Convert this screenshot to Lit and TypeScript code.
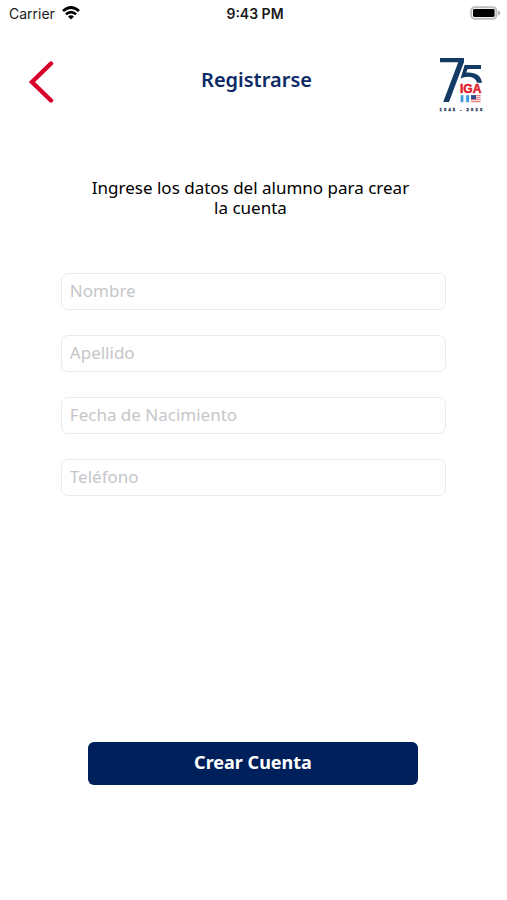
import { LitElement, html, css, svg } from "lit";
import { customElement, property } from "lit/decorators.js";

@customElement("status-bar")
class StatusBar extends LitElement {
  static styles = css`
    :host {
      display: grid;
      grid-template-columns: 1fr auto 1fr;
      align-items: center;
      height: 26px;
      padding: 0 6px 0 9px;
      font-family: Inter, "Liberation Sans", sans-serif;
      font-size: 14px;
      color: #1a1a1a;
    }
    .carrier {
      display: flex;
      align-items: center;
      gap: 7px;
    }
    .time {
      font-weight: 600;
    }
    .battery {
      justify-self: end;
    }
    svg {
      display: block;
    }
  `;

  render() {
    return html`
      <div class="carrier">
        <span>Carrier</span>
        <svg width="18" height="14" viewBox="0 0 18 14" aria-hidden="true">
          <g fill="none" stroke="#000" stroke-width="2.7">
            <path d="M1 5 Q9 -2 17 5" />
            <path d="M3.9 8.3 Q9 3.9 14.1 8.3" />
          </g>
          <path d="M6 10.6 Q9 8 12 10.6 L9 13.6 Z" fill="#000" />
        </svg>
      </div>
      <span class="time">9:43 PM</span>
      <svg class="battery" width="31" height="14" viewBox="0 0 31 14" aria-hidden="true">
        <rect x="1.2" y="1.2" width="25.2" height="11.6" rx="3.6" fill="#fff" stroke="#bdbdbd" stroke-width="2" />
        <rect x="3" y="3" width="21.6" height="8" rx="1.4" fill="#000" />
        <path d="M28 4.6 Q30.4 5.6 30.4 7 Q30.4 8.4 28 9.4 Z" fill="#b4b4b4" />
      </svg>
    `;
  }
}

@customElement("iga-logo")
class IgaLogo extends LitElement {
  static styles = css`
    :host {
      display: block;
    }
    svg {
      display: block;
    }
    .name {
      font: 700 12px "Liberation Sans", sans-serif;
      fill: #e0202c;
      stroke: #e0202c;
      stroke-width: 0.5px;
    }
    .years {
      font: 700 4px "Liberation Sans", sans-serif;
      fill: #24365c;
      stroke: #24365c;
      stroke-width: 0.3px;
    }
  `;

  render() {
    const first = [..."1945"].map((c, i) => svg`<text x=${0.6 + i * 4.4} y="54">${c}</text>`);
    const last = [..."2020"].map((c, i) => svg`<text x=${27.4 + i * 4.5} y="54">${c}</text>`);
    return html`
      <svg width="46" height="56" viewBox="0 0 46 56" role="img" aria-label="IGA 75, 1945 - 2020">
        <path d="M1 1 H25 V5 L10 45 H4.2 L19.2 5.2 H1 Z" fill="#143a66" />
        <path d="M25.6 8 H42 V12 H28.6 L27.2 15.6 Q41.4 14.8 43 25.8 H38.2 Q36 19.4 28.6 19.8 Q25 20 21.6 21.4 Z" fill="#143a66" />
        <text class="name" x="21" y="36.2">IGA</text>
        <rect x="21.6" y="38.2" width="3" height="7" fill="#3b9be0" />
        <rect x="24.6" y="38.2" width="2.6" height="7" fill="#eef6fc" />
        <rect x="27.2" y="38.2" width="3" height="7" fill="#3b9be0" />
        <rect x="32" y="38.2" width="9.6" height="7" fill="#fff" />
        <path d="M32 38.7 H41.6 M32 40.7 H41.6 M32 42.7 H41.6 M32 44.7 H41.6" stroke="#e0606a" stroke-width="1" />
        <rect x="32" y="38.2" width="5" height="4" fill="#2b4f8c" />
        <g class="years">${first}<text x="21" y="54">-</text>${last}</g>
      </svg>
    `;
  }
}

@customElement("text-field")
class TextField extends LitElement {
  @property() label = "";
  @property() type = "text";

  static styles = css`
    :host {
      display: block;
    }
    input {
      display: block;
      box-sizing: border-box;
      width: 100%;
      height: 37px;
      margin: 0;
      padding: 0 8px 2px;
      border: 1px solid #ebebeb;
      border-radius: 7px;
      background: #fff;
      font: 400 17px "Noto Sans", "Open Sans", sans-serif;
      color: #000;
      outline: none;
    }
    input:focus-visible {
      border-color: #00205b;
    }
    input::placeholder {
      color: #c6c6c8;
      opacity: 1;
    }
  `;

  render() {
    return html`<input type=${this.type} placeholder=${this.label} aria-label=${this.label} />`;
  }
}

@customElement("app-root")
class AppRoot extends LitElement {
  static styles = css`
    :host {
      display: flex;
      flex-direction: column;
      box-sizing: border-box;
      min-height: 100vh;
      background: #fff;
      font-family: "Noto Sans", "Open Sans", sans-serif;
    }
    header {
      display: grid;
      grid-template-columns: 1fr auto 1fr;
      align-items: center;
      margin-top: 31px;
      padding: 0 22px 0 28px;
    }
    .back {
      justify-self: start;
      padding: 0 0 6px;
      border: 0;
      background: none;
      cursor: pointer;
    }
    .back svg {
      display: block;
    }
    h1 {
      margin: 0;
      padding-bottom: 10px;
      font-size: 20px;
      line-height: 24px;
      font-weight: 600;
      color: #0b2a66;
    }
    iga-logo {
      justify-self: end;
    }
    form {
      display: flex;
      flex-direction: column;
      flex: 1;
      padding: 0 12% 115px;
    }
    p {
      margin: 65px 32px 55px 26px;
      font-size: 17px;
      line-height: 20px;
      text-align: center;
      color: #000;
    }
    .fields {
      display: flex;
      flex-direction: column;
      gap: 25px;
    }
    .submit {
      height: 43px;
      margin: auto 28px 0 27px;
      padding: 0 0 4px;
      border: 0;
      border-radius: 6px;
      background: #00205b;
      color: #fff;
      font: 700 18px "Noto Sans", "Open Sans", sans-serif;
      cursor: pointer;
    }
  `;

  render() {
    return html`
      <status-bar></status-bar>
      <header>
        <button class="back" type="button" aria-label="Volver">
          <svg width="26" height="42" viewBox="0 0 26 42" aria-hidden="true">
            <path d="M23 2.5 L4 21 L23 39.5" fill="none" stroke="#d6002a" stroke-width="4.4" stroke-linecap="round" />
          </svg>
        </button>
        <h1>Registrarse</h1>
        <iga-logo></iga-logo>
      </header>
      <form @submit=${(e: Event) => e.preventDefault()}>
        <p>Ingrese los datos del alumno para crear la cuenta</p>
        <div class="fields">
          <text-field label="Nombre"></text-field>
          <text-field label="Apellido"></text-field>
          <text-field label="Fecha de Nacimiento"></text-field>
          <text-field label="Teléfono" type="tel"></text-field>
        </div>
        <button class="submit" type="submit">Crear Cuenta</button>
      </form>
    `;
  }
}
